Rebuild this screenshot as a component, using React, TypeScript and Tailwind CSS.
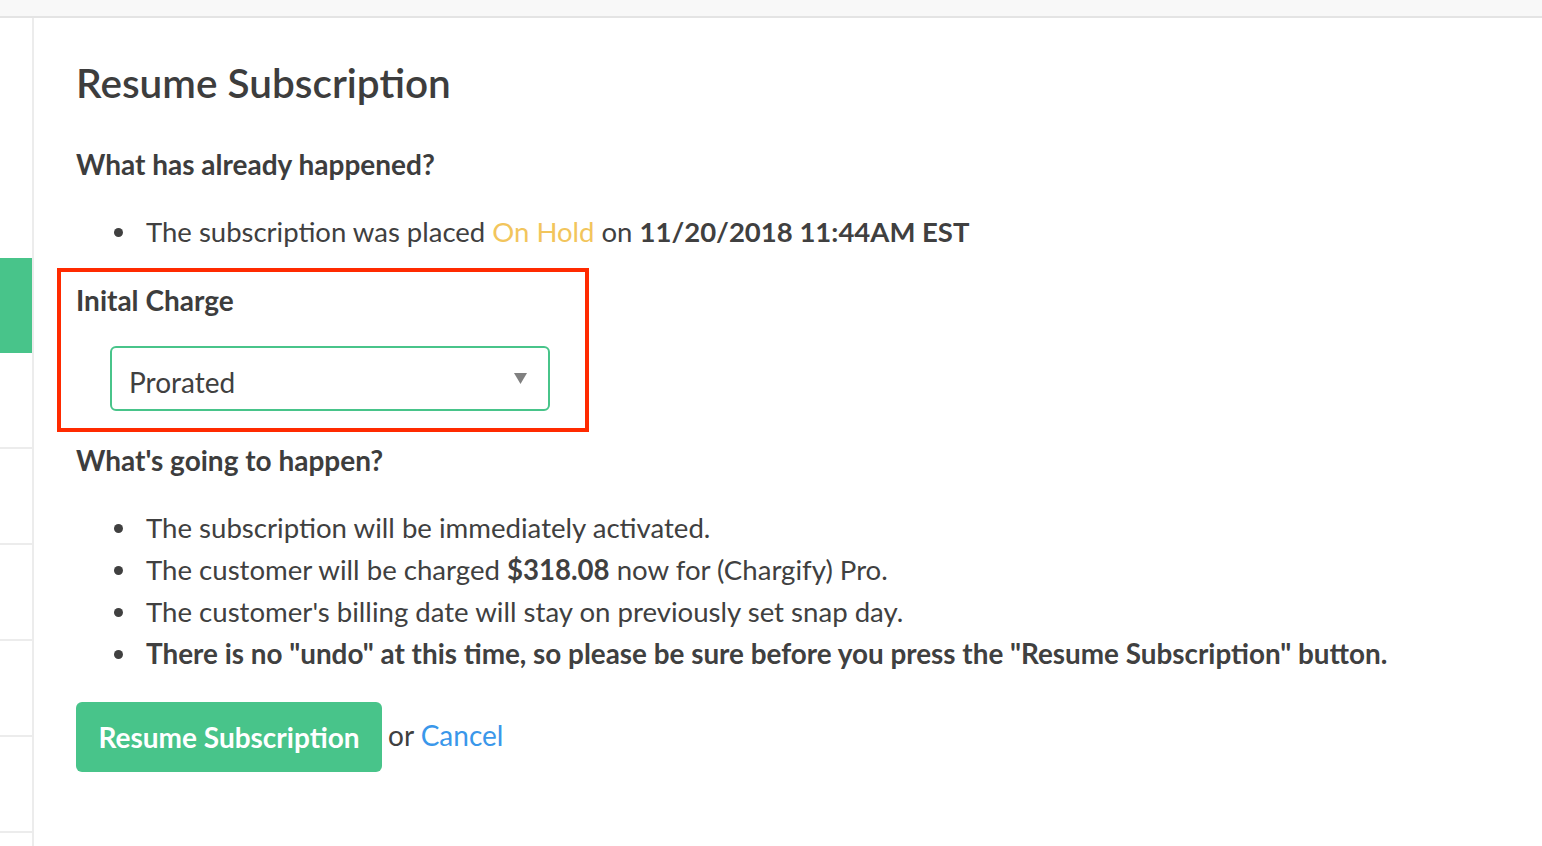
import React from "react";

function Bullet({ children, bold = false }: { children: React.ReactNode; bold?: boolean }) {
  return (
    <li className={"flex items-start " + (bold ? "font-bold text-[27.85px]" : "")}>
      <span className="mt-[17px] ml-[38px] mr-[23px] h-[9px] w-[9px] shrink-0 rounded-full bg-[#404040]" />
      <span>{children}</span>
    </li>
  );
}

export default function App() {
  return (
    <div className="h-[846px] w-full overflow-hidden bg-white text-[#404040]" style={{ fontFamily: "Lato, 'Open Sans', sans-serif" }}>
      <div className="h-[18px] bg-[#f8f8f8] border-b-2 border-[#e4e4e4]" />
      <div className="flex h-[828px]">
        <div className="w-[34px] shrink-0 border-r-2 border-[#ececec] flex flex-col">
          <div className="h-[240px]" />
          <div className="h-[95px] w-[32px] bg-[#48c48a]" />
          <div className="h-[96px] border-b-2 border-[#ececec]" />
          <div className="h-[96px] border-b-2 border-[#ececec]" />
          <div className="h-[96px] border-b-2 border-[#ececec]" />
          <div className="h-[96px] border-b-2 border-[#ececec]" />
          <div className="h-[96px] border-b-2 border-[#ececec]" />
        </div>
        <div className="flex-1 pl-[42px] pt-[40px]">
          <h1 className="text-[40.5px] leading-[50px] font-semibold text-[#3d3d3d]">Resume Subscription</h1>
          <h2 className="mt-[39px] text-[28px] leading-[34px] font-bold text-[#3d3d3d]">What has already happened?</h2>
          <ul className="mt-[30px] text-[27.5px] leading-[42px]">
            <Bullet>
              The subscription was placed <span className="text-[#f2c55c]">On Hold</span> on{" "}
              <span className="font-bold">11/20/2018 11:44AM EST</span>
            </Bullet>
          </ul>
          <div className="-ml-[19px] mt-[15px] w-[532px] h-[164px] border-[4px] border-[#ff2a00] pl-[15px] pt-[11px]">
            <h2 className="text-[28px] leading-[34px] font-bold text-[#3d3d3d]">Inital Charge</h2>
            <div className="mt-[29px] ml-[34px] w-[440px] h-[65px] rounded-[6px] border-2 border-[#48c48a] flex items-center justify-between pl-[17px] pr-[21px]">
              <span className="text-[28px] pt-[7px]">Prorated</span>
              <svg width="13" height="11" viewBox="0 0 13 11">
                <polygon points="0,0 13,0 6.5,11" fill="#808080" />
              </svg>
            </div>
          </div>
          <h2 className="mt-[11px] text-[28px] leading-[34px] font-bold text-[#3d3d3d]">What's going to happen?</h2>
          <ul className="mt-[30px] text-[27.6px] leading-[42px]">
            <Bullet>The subscription will be immediately activated.</Bullet>
            <Bullet>
              The customer will be charged <span className="font-bold">$318.08</span> now for (Chargify) Pro.
            </Bullet>
            <Bullet>The customer's billing date will stay on previously set snap day.</Bullet>
            <Bullet bold>
              There is no "undo" at this time, so please be sure before you press the "Resume Subscription" button.
            </Bullet>
          </ul>
          <div className="mt-[27px] flex items-start">
            <button className="h-[70px] w-[306px] rounded-[6px] bg-[#48c48a] text-white text-[28px] font-bold">
              Resume Subscription
            </button>
            <span className="ml-[6px] mt-[12px] text-[28px]">
              or <a className="text-[#3a97ea]">Cancel</a>
            </span>
          </div>
        </div>
      </div>
    </div>
  );
}
